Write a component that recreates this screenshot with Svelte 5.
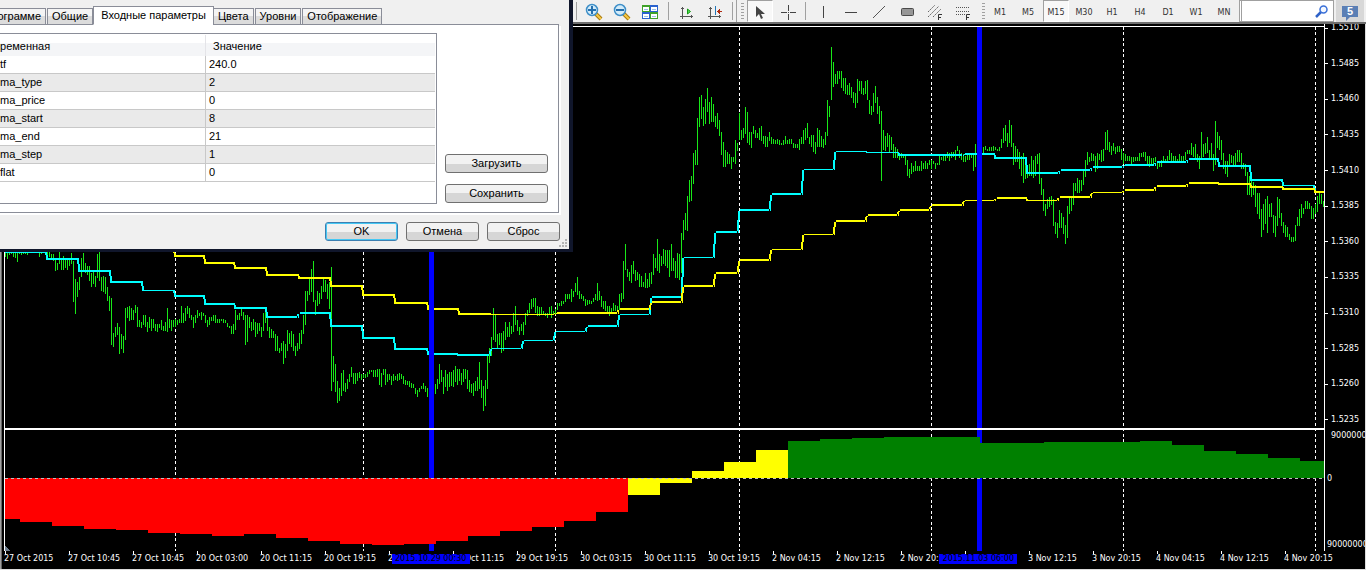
<script lang="ts">
  interface Step {
    /** x where the step ends. */
    to: number;
    y: number;
    /** line thickness, px. */
    h?: number;
  }

  const LEFT = 4;
  const RIGHT = 1324;
  const ZERO = 478;

  const params = [
    ['tf', '240.0'],
    ['ma_type', '2'],
    ['ma_price', '0'],
    ['ma_start', '8'],
    ['ma_end', '21'],
    ['ma_step', '1'],
    ['flat', '0'],
  ];

  const tabs = ['О программе', 'Общие', 'Входные параметры', 'Цвета', 'Уровни', 'Отображение'];
  let activeTab = $state('Входные параметры');

  const periods = ['M1', 'M5', 'M15', 'M30', 'H1', 'H4', 'D1', 'W1', 'MN'];
  let period = $state('M15');
  let query = $state('');

  const prices = [
    '1.5510', '1.5485', '1.5460', '1.5435', '1.5410', '1.5385',
    '1.5360', '1.5335', '1.5310', '1.5285', '1.5260', '1.5235',
  ];

  const times = [
    '27 Oct 2015', '27 Oct 10:45', '27 Oct 10:45', '20 Oct 03:00', '20 Oct 11:15',
    '20 Oct 19:15', '29 Oct 03:15', '29 Oct 11:15', '29 Oct 19:15', '30 Oct 03:15',
    '30 Oct 11:15', '30 Oct 19:15', '2 Nov 04:15', '2 Nov 12:15', '2 Nov 20:15',
    '3 Nov 04:15', '3 Nov 12:15', '3 Nov 20:15', '4 Nov 04:15', '4 Nov 12:15',
    '4 Nov 20:15',
  ];

  const marks = [
    { x: 392, text: '2015.10.29 00:30' },
    { x: 940, text: '2015.11.03 06:00' },
  ];
  const markLines = [429, 977];
  const dayLines = [175, 363, 555, 739, 931, 1123, 1315];

  // high-low pairs, one bar every 2px starting at x = 5
  const bars = `
    252-257 252-259 252-255 252-254 252-257 252-258 252-262 252-254 252-255 252-254
    252-254 252-255 250-252 250-252 250-252 250-252 250-252 252-257 252-254 250-252
    250-252 252-257 252-257 254-260 254-261 258-271 263-270 252-264 259-270 256-270
    259-268 259-270 259-266 253-264 261-302 279-314 282-297 277-290 258-277 253-272
    263-273 266-275 266-281 273-287 271-284 276-287 254-278 252-281 277-291 276-292
    277-294 287-301 296-311 298-345 333-347 327-337 323-335 327-354 334-349 336-353
    308-340 307-318 306-321 308-320 310-320 305-313 307-327 320-327 322-328 315-325
    315-327 322-332 317-328 319-331 319-328 324-331 324-332 324-328 320-330 326-331
    322-331 308-332 319-328 320-331 320-327 319-327 320-325 319-323 306-323 313-323
    308-321 306-314 308-318 315-320 317-328 315-323 310-318 313-316 312-320 313-316
    315-323 320-327 317-325 317-321 315-321 315-323 319-323 319-323 319-321 319-323
    320-323 323-327 326-328 326-334 324-334 310-330 315-320 313-320 309-316 312-320
    315-345 315-342 317-328 322-331 319-330 322-337 323-334 323-331 327-337 313-331
    310-323 317-331 327-338 329-338 331-338 334-351 336-351 348-353 343-351 341-364
    344-358 330-351 333-344 331-347 334-351 346-356 343-351 333-349 330-344 315-334
    291-325 291-301 278-295 269-292 261-302 300-315 291-306 293-304 286-299 278-292
    280-292 284-299 282-309 267-391 356-382 364-392 381-403 388-401 373-396 370-391
    383-392 379-389 374-382 367-377 373-384 373-384 373-381 372-378 374-380 374-378
    374-378 372-377 370-374 370-372 370-377 370-377 369-377 369-385 373-387 369-375
    369-385 374-382 374-380 376-385 374-381 376-380 374-381 373-380 374-379 376-384
    380-385 381-385 381-387 383-388 384-388 388-394 390-397 388-392 386-389 383-389
    386-392 388-397 388-394 386-392 386-394 384-394 379-389 364-384 370-382 377-394
    370-387 374-391 372-387 372-386 370-387 366-382 369-385 369-381 373-385 369-382
    369-379 370-389 380-392 384-393 383-396 381-391 377-391 362-389 380-398 386-411
    380-406 356-389 348-363 337-356 308-340 314-342 334-348 333-345 333-353 331-351
    322-340 327-337 322-337 326-334 313-332 306-325 320-331 327-335 324-331 322-335
    313-325 310-316 303-313 299-309 298-307 298-313 306-316 307-316 307-314 311-314
    313-316 313-318 307-315 306-318 311-314 309-314 303-310 303-306 301-306 301-304
    294-302 294-299 294-299 289-302 291-297 283-292 277-295 291-299 294-299 296-301
    299-306 300-305 300-304 301-304 298-302 294-300 283-301 291-300 296-307 301-309
    301-311 306-313 306-316 308-312 303-311 305-311 306-311 294-310 293-302 261-299
    244-270 269-277 272-281 265-283 261-274 270-281 272-280 274-287 276-287 282-287
    273-288 279-288 273-287 272-284 254-275 258-268 239-271 254-273 256-266 249-264
    250-266 250-268 250-277 244-271 258-271 261-278 253-278 254-280 233-273 220-240
    213-230 196-231 180-202 176-201 153-184 150-165 118-165 97-127 95-119 107-126
    99-124 88-112 102-124 97-122 104-122 116-127 113-129 120-136 132-155 142-167
    150-167 152-164 154-164 157-169 157-162 140-164 143-151 113-140 130-140 128-138
    107-134 112-143 132-145 132-148 126-134 130-138 133-138 128-140 126-141 136-144
    136-147 137-147 132-141 137-144 139-144 140-144 139-144 140-145 143-145 140-145
    136-144 140-144 139-144 139-144 143-148 144-148 144-148 139-150 137-144 130-144
    128-140 123-138 137-144 135-147 135-152 142-154 128-147 130-147 136-147 139-148
    132-145 100-136 106-117 47-100 62-87 74-84 71-84 71-79 71-88 78-91
    78-94 85-95 83-95 87-98 92-103 93-108 79-103 81-91 81-94 88-95
    81-94 80-100 100-114 106-115 93-112 86-103 97-114 106-124 111-181 130-150
    136-151 133-147 135-152 137-150 144-158 147-158 149-158 154-160 153-158 155-158
    155-165 160-176 169-178 163-174 166-172 161-171 166-171 166-171 161-171 163-169
    161-169 163-169 160-165 160-169 161-164 163-169 163-165 155-165 157-160 156-161
    156-161 152-158 153-161 152-158 152-157 150-160 146-151 150-158 153-160 154-162
    156-162 154-160 154-160 153-158 154-171 144-167 147-160 147-158 147-155 147-153
    146-150 149-151 147-151 147-151 146-151 147-150 149-151 147-151 139-148 128-143
    125-141 133-147 120-143 125-147 143-165 146-162 149-162 152-169 156-176 153-183
    157-179 170-178 164-176 156-176 160-178 156-176 154-164 153-184 178-195 189-211
    204-216 199-209 197-207 196-205 199-226 222-234 223-238 210-228 213-228 217-234
    225-244 206-238 197-214 197-211 183-205 183-191 178-193 180-193 180-191 171-185
    160-177 152-165 157-162 153-161 154-161 156-172 153-169 154-160 150-162 149-161
    132-150 130-150 142-152 146-155 143-151 147-154 146-152 146-152 149-160 153-164
    154-161 156-161 156-161 157-164 157-162 157-161 157-161 153-161 153-157 152-157
    152-161 156-164 156-167 158-165 158-164 157-162 162-169 161-167 160-167 156-163
    159-163 156-161 150-160 153-162 156-163 156-163 159-162 154-162 156-161 156-161
    152-160 150-154 150-154 143-155 147-157 144-160 154-162 156-169 132-158 144-157
    143-154 137-153 150-159 143-158 154-171 121-165 132-148 136-150 140-160 153-169
    161-174 161-177 154-167 155-163 156-167 153-165 150-162 150-162 153-169 163-169
    164-176 172-195 176-195 180-197 182-195 185-207 193-214 193-219 209-237 204-230
    199-224 196-233 204-217 203-217 215-233 216-237 197-226 199-218 213-226 222-233
    225-237 227-237 234-240 237-242 237-242 225-241 217-226 209-226 204-218 208-214
    201-209 201-209 203-209 206-219 208-219 204-214 196-212 193-204 194-204 201-207`;

  const barPath = bars
    .trim()
    .split(/\s+/)
    .map((pair, i) => {
      const [hi, lo] = pair.split('-').map(Number);
      return `M${5 + i * 2} ${hi}h1V${lo}h-1z`;
    })
    .join('');

  const fast: Step[] = [
    { to: 46, y: 251 }, { to: 78, y: 258 }, { to: 110, y: 270 }, { to: 142, y: 281 },
    { to: 174, y: 290, h: 1 }, { to: 204, y: 295 }, { to: 234, y: 303 }, { to: 266, y: 307 },
    { to: 298, y: 316 }, { to: 330, y: 312 }, { to: 362, y: 325 }, { to: 394, y: 337 },
    { to: 427, y: 348 }, { to: 457, y: 353 }, { to: 490, y: 354 }, { to: 522, y: 348, h: 1 },
    { to: 554, y: 340, h: 1 }, { to: 586, y: 331, h: 1 }, { to: 618, y: 325 },
    { to: 650, y: 314, h: 1 }, { to: 682, y: 296 }, { to: 714, y: 257, h: 1 },
    { to: 738, y: 231 }, { to: 770, y: 209 }, { to: 802, y: 193 }, { to: 834, y: 169, h: 1 },
    { to: 866, y: 151, h: 1 }, { to: 898, y: 152, h: 1 }, { to: 963, y: 154 },
    { to: 994, y: 153 }, { to: 1026, y: 157 }, { to: 1059, y: 172 }, { to: 1091, y: 169 },
    { to: 1123, y: 166 }, { to: 1155, y: 164 }, { to: 1187, y: 161 }, { to: 1218, y: 158 },
    { to: 1250, y: 165 }, { to: 1282, y: 179 }, { to: 1314, y: 185, h: 1 }, { to: 1324, y: 191 },
  ];

  const slow: Step[] = [
    { to: 174, y: 250 }, { to: 204, y: 255 }, { to: 234, y: 262 }, { to: 266, y: 267 },
    { to: 298, y: 274 }, { to: 330, y: 277 }, { to: 362, y: 285 }, { to: 394, y: 294 },
    { to: 427, y: 302 }, { to: 458, y: 308 }, { to: 490, y: 313 }, { to: 555, y: 314, h: 1 },
    { to: 618, y: 312 }, { to: 650, y: 308 }, { to: 682, y: 301 }, { to: 714, y: 285 },
    { to: 738, y: 272 }, { to: 770, y: 259 }, { to: 802, y: 249, h: 1 },
    { to: 834, y: 234, h: 1 }, { to: 866, y: 220 }, { to: 898, y: 214 }, { to: 930, y: 209 },
    { to: 963, y: 204 }, { to: 995, y: 200, h: 1 }, { to: 1026, y: 197 },
    { to: 1058, y: 200, h: 1 }, { to: 1091, y: 196 }, { to: 1123, y: 192, h: 1 },
    { to: 1155, y: 189 }, { to: 1187, y: 185 }, { to: 1218, y: 182 }, { to: 1250, y: 183 },
    { to: 1282, y: 186 }, { to: 1314, y: 188 }, { to: 1324, y: 191 },
  ];

  function stepPath(steps: Step[]): string {
    let x = 5;
    let d = '';
    steps.forEach((s, i) => {
      const h = s.h ?? 2;
      d += `M${x} ${s.y}H${s.to}v${h}H${x}z`;
      const next = steps[i + 1];
      if (next) {
        // the riser leans one pixel to the right at its far end
        const mid = Math.round((s.y + next.y) / 2);
        const start = s.y + (next.y < s.y ? h : 0);
        const end = next.y + (next.y > s.y ? (next.h ?? 2) : 0);
        d += `M${s.to - 1} ${start}h2V${mid}h-2zM${s.to} ${mid}h2V${end}h-2z`;
      }
      x = s.to;
    });
    return d;
  }

  const histogram: [number, number, string][] = [
    [20, 519, 'down'], [52, 522, 'down'], [84, 526, 'down'], [116, 529, 'down'],
    [148, 530, 'down'], [180, 533, 'down'], [212, 534, 'down'], [244, 536, 'down'],
    [276, 534, 'down'], [308, 538, 'down'], [340, 541, 'down'], [372, 544, 'down'],
    [404, 545, 'down'], [436, 544, 'down'], [468, 541, 'down'], [500, 536, 'down'],
    [532, 531, 'down'], [564, 527, 'down'], [596, 521, 'down'], [628, 512, 'down'],
    [660, 495, 'flat'], [692, 483, 'flat'], [724, 471, 'flat'], [756, 462, 'flat'],
    [788, 450, 'flat'], [820, 441, 'up'], [852, 439, 'up'], [884, 438, 'up'],
    [980, 437, 'up'], [1044, 443, 'up'], [1140, 442, 'up'], [1172, 441, 'up'],
    [1204, 445, 'up'], [1236, 451, 'up'], [1268, 454, 'up'], [1300, 458, 'up'],
    [1324, 461, 'up'],
  ];

  const columns = histogram.map(([to, y, kind], i) => {
    const x = i ? histogram[i - 1][0] : 5;
    return { x, width: to - x, y: Math.min(y, ZERO), height: Math.abs(y - ZERO), kind };
  });
</script>

{#snippet magnifier(plus: boolean)}
  <svg width="18" height="18" viewBox="0 0 18 18">
    <path d="M10 10l6 6" stroke="#a87a10" stroke-width="4" />
    <path d="M10 10l6 6" stroke="#f7c843" stroke-width="2" />
    <circle cx="7" cy="7" r="5.5" fill="#d3ecfa" stroke="#3f8fc8" stroke-width="1.5" />
    <path d={plus ? 'M3 7h8M7 3v8' : 'M3 7h8'} stroke="#256fae" stroke-width="2" />
  </svg>
{/snippet}

<div class="terminal">
  <div class="toolbar">
    <span class="sep"></span>
    <button type="button" class="tool" aria-label="Zoom in">{@render magnifier(true)}</button>
    <button type="button" class="tool" aria-label="Zoom out">{@render magnifier(false)}</button>
    <button type="button" class="tool" aria-label="Tile windows">
      <svg width="16" height="14" viewBox="0 0 16 14">
        <path fill="#3fa22a" d="M0 0h8v7H0zM8 7h8v7H8z" />
        <path fill="#2a62cf" d="M8 0h8v7H8zM0 7h8v7H0z" />
        <path fill="#fff" d="M1 2h6v4H1zM9 2h6v4H9zM1 9h6v4H1zM9 9h6v4H9z" />
        <path stroke="#9cc0e8" d="M2 4.5h4M10 4.5h4M2 11.5h4M10 11.5h4" />
      </svg>
    </button>
    <span class="sep wide"></span>
    <button type="button" class="tool" aria-label="Auto scroll">
      <svg width="16" height="16" viewBox="0 0 16 16" fill="none" stroke="#555">
        <path d="M3.5 3v12M1 12.5h13M2 4.5h3M12.5 11v3" />
        <path d="M8.5 5v5l3-2.5z" fill="#4fe04f" stroke="#159a15" />
      </svg>
    </button>
    <button type="button" class="tool" aria-label="Chart shift">
      <svg width="16" height="16" viewBox="0 0 16 16" fill="none" stroke="#555">
        <path d="M3.5 3v12M1 12.5h13M2 4.5h3M12.5 11v3" />
        <path d="M8.5 2v9" stroke="#2276b8" />
        <path d="M10 7.5h5M12.5 5v5M11.5 6v3" stroke="#b02a10" />
      </svg>
    </button>
    <span class="sep"></span>
    <span class="grip"></span>
    <button type="button" class="tool pressed" aria-label="Cursor">
      <svg width="12" height="15" viewBox="0 0 12 15">
        <path fill="#444" d="M2 1v11l3-3 2 5 2-1-2-4h4z" />
      </svg>
    </button>
    <button type="button" class="tool" aria-label="Crosshair">
      <svg width="15" height="15" viewBox="0 0 15 15" stroke="#444">
        <path d="M7.5 0v6M7.5 9v6M0 7.5h6M9 7.5h6M7 7.5h1" />
      </svg>
    </button>
    <span class="sep"></span>
    <button type="button" class="tool" aria-label="Vertical line">
      <svg width="14" height="14" viewBox="0 0 14 14" stroke="#444"><path d="M7.5 1v12" /></svg>
    </button>
    <button type="button" class="tool" aria-label="Horizontal line">
      <svg width="14" height="14" viewBox="0 0 14 14" stroke="#444"><path d="M1 7.5h12" /></svg>
    </button>
    <button type="button" class="tool" aria-label="Trendline">
      <svg width="14" height="14" viewBox="0 0 14 14" stroke="#555"><path d="M1 13L13 1" /></svg>
    </button>
    <button type="button" class="tool" aria-label="Rectangle">
      <svg width="14" height="10" viewBox="0 0 14 10">
        <rect x="1.5" y="1.5" width="12" height="7" rx="1" fill="#969696" stroke="#4a4a4a" />
      </svg>
    </button>
    <button type="button" class="tool" aria-label="Channel">
      <svg width="16" height="16" viewBox="0 0 16 16" fill="none" stroke="#666">
        <path d="M1 8l7-7M1 13L12 2M6 13l8-8" stroke-dasharray="2 1" />
        <path d="M11.5 16v-5.5H15M11.5 13.5H14" stroke="#333" />
      </svg>
    </button>
    <button type="button" class="tool" aria-label="Fibonacci retracement">
      <svg width="16" height="16" viewBox="0 0 16 16" fill="none" stroke="#555">
        <path d="M1 3.5h14M1 7.5h14M1 10.5h9" stroke-dasharray="1 1" />
        <path d="M11.5 16v-5.5H15M11.5 13.5H14" stroke="#333" />
      </svg>
    </button>
    <span class="grip plain"></span>
    {#each periods as p}
      <button type="button" class="tool" class:pressed={period === p} onclick={() => (period = p)}>{p}</button>
    {/each}
    <div class="search">
      <input type="text" aria-label="Search" bind:value={query} />
      <svg width="14" height="13" viewBox="0 0 14 13" fill="none">
        <path d="M6 7L1 12" stroke="#2f62c8" stroke-width="2.5" />
        <circle cx="8.5" cy="4.500" r="3.5" fill="#f4f8ff" stroke="#3a70d8" stroke-width="1.5" />
      </svg>
    </div>
    <button type="button" class="chat" aria-label="Messages">
      <span class="bubble">5</span>
    </button>
  </div>

  <div class="chart">
    <svg class="plot" viewBox="{LEFT} 24 {RIGHT - LEFT} 527" preserveAspectRatio="none" shape-rendering="crispEdges">
      {#each dayLines as x}
        <path class="day" d="M{x + 0.5} 27V551" />
      {/each}
      <path class="bars" d={barPath} />
      <path class="fast" d={stepPath(fast)} />
      <path class="slow" d={stepPath(slow)} />
      {#each markLines as x}
        <rect class="mark-line" {x} y="27" width="5" height="524" />
      {/each}
      {#each columns as c}
        <rect class={c.kind} x={c.x} y={c.y} width={c.width} height={c.height} />
      {/each}
      <path class="zero" d="M5 478.5H{RIGHT}" />
      <path class="frame" d="M4 26H{RIGHT}v1H5V551H4zM4 428H{RIGHT}v2H4z" />
      <path class="corner" d="M5 546l5 5H5z" />
    </svg>

    <div class="axis">
      <div class="prices">
        {#each prices as price}
          <span class="price">{price}</span>
        {/each}
      </div>
      <div class="levels">
        <span class="level">90000000</span>
        <span class="level">0</span>
        <span class="level">90000000</span>
      </div>
    </div>

    <div class="times">
      {#each times as time}
        <span class="time">{time}</span>
      {/each}
    </div>
    {#each marks as mark}
      <span class="mark" style="left: {(mark.x / 1366) * 100}%">{mark.text}</span>
    {/each}
  </div>

  <div class="dialog" role="dialog" aria-label="Входные параметры">
    <div class="tabs" role="tablist">
      {#each tabs as tab}
        <button
          type="button"
          role="tab"
          class="tab"
          class:active={activeTab === tab}
          aria-selected={activeTab === tab}
          onclick={() => (activeTab = tab)}
        >{tab}</button>
      {/each}
    </div>
    <div class="panel">
      <div class="list">
        <table>
          <thead>
            <tr><th class="name">Переменная</th><th>Значение</th></tr>
          </thead>
          <tbody>
            {#each params as [name, value]}
              <tr><td class="name">{name}</td><td>{value}</td></tr>
            {/each}
          </tbody>
        </table>
      </div>
      <div class="side">
        <button type="button" class="btn">Загрузить</button>
        <button type="button" class="btn">Сохранить</button>
      </div>
    </div>
    <div class="actions">
      <button type="button" class="btn primary">OK</button>
      <button type="button" class="btn">Отмена</button>
      <button type="button" class="btn">Сброс</button>
    </div>
    <svg class="resize" width="8" height="8" viewBox="0 0 8 8" fill="#b4b4b4">
      <path d="M6 0h2v2H6zM3 3h2v2H3zM6 3h2v2H6zM0 6h2v2H0zM3 6h2v2H3zM6 6h2v2H6z" />
    </svg>
  </div>
</div>

<style>
  :global(body) {
    margin: 0;
    background: #000;
  }
  .terminal {
    position: relative;
    overflow: hidden;
    font-family: "Liberation Sans", Arial, sans-serif;
    font-size: 11px;
    color: #000;
  }
  button {
    margin: 0;
    padding: 0;
    border: none;
    background: none;
    color: inherit;
    font: inherit;
  }

  .toolbar {
    display: flex;
    justify-content: flex-end;
    box-sizing: border-box;
    height: 24px;
    padding-right: 2px;
    border-bottom: 2px solid #6e6e6e;
    background: #f0f0f0;
  }
  .tool {
    display: flex;
    flex: 0 0 28px;
    align-items: center;
    justify-content: center;
    box-sizing: border-box;
    height: 22px;
    padding-top: 2px;
    color: #333;
    font-family: "DejaVu Sans", Verdana, sans-serif;
    font-size: 8px;
  }
  .pressed {
    flex-basis: 26px;
    margin: 0 1px;
    border: 1px solid #fff;
    border-top-color: #a0a0a0;
    border-left-color: #a0a0a0;
    background: #f8f8f8;
  }
  .sep {
    flex: 0 0 1px;
    height: 18px;
    margin: 2px 3px 0;
    background: #a0a0a0;
  }
  .sep.wide {
    margin: 2px 4px 0;
  }
  .grip {
    box-sizing: border-box;
    flex: 0 0 10px;
    border-left: 1px solid #a0a0a0;
    background: repeating-linear-gradient(#a0a0a0 0 1px, #f0f0f0 1px 3px) 4px 3px / 3px 17px no-repeat;
  }
  .grip.plain {
    flex-basis: 9px;
    border-left-color: transparent;
  }
  .search {
    display: flex;
    align-items: center;
    box-sizing: border-box;
    flex: 0 0 95px;
    min-width: 0;
    height: 22px;
    margin: 0 2px 0 1px;
    padding-right: 4px;
    border: 1px solid #a0a0a0;
    border-left: 3px double #a0a0a0;
    background: #fff;
  }
  .search input {
    flex: 1;
    width: 0;
    min-width: 0;
    border: none;
    outline: none;
    background: none;
    font: inherit;
  }
  .search svg {
    flex: none;
  }
  .chat {
    display: flex;
    flex: 0 0 28px;
    align-items: center;
    justify-content: center;
    height: 22px;
    background: #d8d8d8;
  }
  .bubble {
    position: relative;
    width: 16px;
    height: 11px;
    background: #5b7fb5;
    color: #fff;
    font-size: 11px;
    font-weight: bold;
    line-height: 11px;
  }
  .bubble::after {
    content: "";
    position: absolute;
    top: 11px;
    left: 4px;
    border-top: 4px solid #5b7fb5;
    border-right: 4px solid transparent;
  }

  .chart {
    position: relative;
    display: grid;
    grid-template-columns: minmax(0, 1fr) 41px;
    grid-template-rows: auto 18px;
    padding-left: 2px;
    border: solid #dcdcdc;
    border-width: 0 1px 1px 0;
    background: linear-gradient(90deg, #a0a0a0 1px, #666 1px 2px, #000 2px);
    color: #fff;
    font-family: "DejaVu Sans", Verdana, sans-serif;
    font-size: 8px;
    line-height: 8px;
  }
  .plot {
    display: block;
    box-sizing: border-box;
    width: 100%;
    height: 527px;
    padding-left: 2px;
  }
  .day {
    fill: none;
    stroke: #fff;
    stroke-dasharray: 3 2 3 3;
  }
  .bars {
    fill: #18e818;
  }
  .fast {
    fill: #0ff;
  }
  .slow,
  .flat {
    fill: #ff0;
  }
  .mark-line {
    fill: #00f;
  }
  .down {
    fill: #f00;
  }
  .up {
    fill: #008000;
  }
  .zero {
    fill: none;
    stroke: #c0c0c0;
    stroke-dasharray: 3 3;
  }
  .frame {
    fill: #fff;
  }
  .corner {
    fill: #708090;
  }
  .axis {
    display: flex;
    flex-direction: column;
    justify-content: space-between;
    overflow: hidden;
    border-left: 1px solid #fff;
  }
  .prices {
    display: flex;
    flex-direction: column;
    justify-content: space-between;
    height: 400px;
  }
  .price {
    display: flex;
    align-items: center;
    gap: 3px;
  }
  .price::before {
    content: "";
    width: 3px;
    height: 1px;
    background: #fff;
  }
  .levels {
    display: grid;
    grid-template-rows: 43px 66px 10px;
    padding-left: 2px;
  }
  .level:first-child {
    padding-left: 4px;
  }
  .times {
    display: grid;
    grid-column: 1 / -1;
    grid-template-columns: repeat(21, minmax(0, 1fr));
    padding: 0 17px 0 2px;
  }
  .time {
    white-space: nowrap;
  }
  .time::before {
    content: "";
    display: block;
    width: 1px;
    height: 3px;
    margin: 0 0 1px 1px;
    background: #fff;
  }
  .mark {
    position: absolute;
    bottom: 5px;
    width: 78px;
    background: #00f;
    color: #000;
    line-height: 10px;
    text-align: center;
    white-space: nowrap;
  }

  /* runs past the left edge of the window */
  .dialog {
    position: absolute;
    top: 0;
    left: -60px;
    box-sizing: border-box;
    width: 633px;
    padding: 6px 10px 8px 0;
    border: solid #10162b;
    border-width: 0 4px 3px 0;
    background: #f0f0f0;
  }
  .tabs {
    display: flex;
    align-items: flex-end;
    height: 19px;
    margin-bottom: -1px;
  }
  .tab {
    position: relative;
    box-sizing: border-box;
    height: 17px;
    margin-right: 1px;
    padding: 0 4px;
    border: 1px solid #8a8d98;
    background: linear-gradient(#f4f4f4 50%, #dcdcdc 50%);
    line-height: 15px;
    white-space: nowrap;
  }
  .tab:first-child {
    flex: 0 0 106px;
    text-align: right;
  }
  .tab.active {
    height: 19px;
    margin: 0 -1px;
    padding: 0 7px;
    border-bottom-color: #fff;
    background: #fff;
  }
  .panel {
    display: flex;
    gap: 8px;
    padding: 8px 10px 8px 0;
    border: 1px solid #8a8d98;
    border-left: none;
    background: #fff;
    box-shadow: 2px 2px #fff;
  }
  .list {
    box-sizing: border-box;
    flex: 1;
    height: 171px;
    padding: 1px 1px 0 0;
    border: 1px solid #8a8d98;
    border-left: none;
  }
  table {
    width: 100%;
    border-collapse: separate;
    border-spacing: 0;
    table-layout: fixed;
  }
  th,
  td {
    box-sizing: border-box;
    height: 18px;
    padding: 0 0 0 3px;
    border-bottom: 1px solid #c8c8c8;
    line-height: 17px;
    text-align: left;
  }
  th {
    height: 21px;
    padding-left: 7px;
    border-bottom: none;
    background: linear-gradient(#fff 8px, #f4f5f7 8px);
    font-weight: normal;
    line-height: 20px;
  }
  .name {
    width: 266px;
    padding-left: 60px;
    border-right: 1px solid #c8c8c8;
  }
  th.name {
    padding-left: 46px;
    border-right-color: #e4e4e8;
  }
  tbody tr:nth-child(even) {
    background: #eaeaea;
  }
  .side {
    display: flex;
    flex: 0 0 103px;
    flex-direction: column;
    justify-content: flex-end;
    gap: 11px;
    padding-bottom: 1px;
  }
  .btn {
    box-sizing: border-box;
    height: 19px;
    border: 1px solid #707070;
    border-radius: 3px;
    background: linear-gradient(#f2f2f2 50%, #d6d6d6 50%);
    line-height: 17px;
  }
  .actions {
    display: flex;
    justify-content: flex-end;
    gap: 8px;
    margin: 9px -1px 0 0;
  }
  .actions .btn {
    width: 73px;
  }
  .primary {
    border-color: #3c7fb1;
    box-shadow: inset 0 0 0 1px #45c8f4;
  }
  .resize {
    position: absolute;
    right: 2px;
    bottom: 2px;
  }
</style>
